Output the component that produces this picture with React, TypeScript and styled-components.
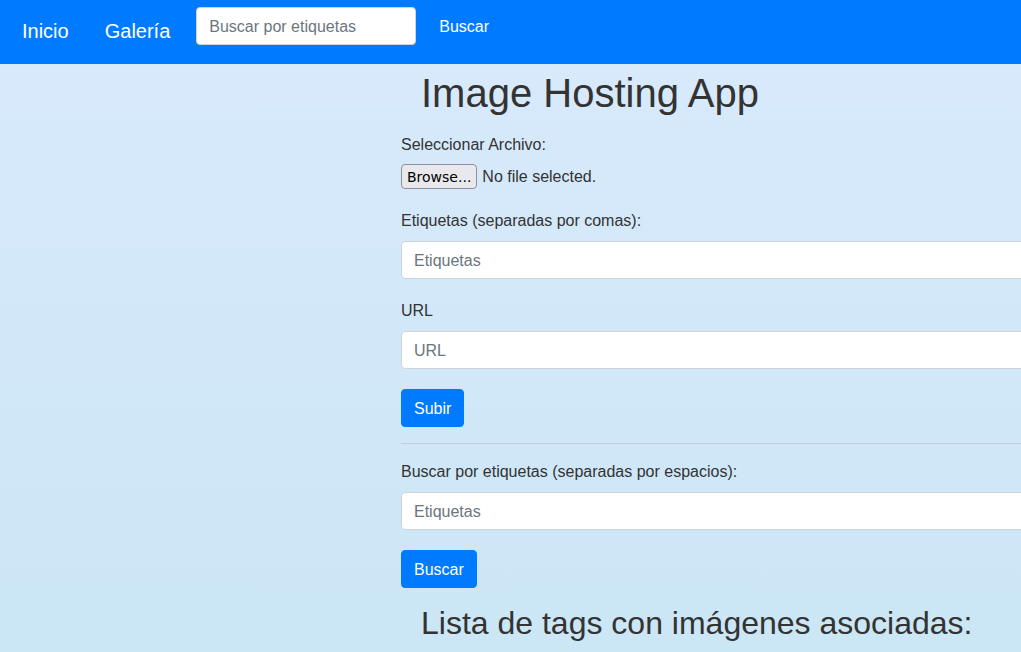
import React from "react";
import styled, { createGlobalStyle } from "styled-components";

const GlobalStyle = createGlobalStyle`
  html, body {
    margin: 0;
    padding: 0;
  }
  body {
    font-family: "Liberation Sans", Arial, sans-serif;
    color: #333333;
    background: linear-gradient(to bottom, #d9eafc 0%, #cbe6f5 100%);
    min-height: 100vh;
    overflow: hidden;
  }
  * { box-sizing: border-box; }
`;

const Navbar = styled.nav`
  height: 64px;
  background: #007bff;
  display: flex;
  align-items: flex-start;
  padding: 7px 0 0 4px;
`;

const NavLink = styled.a`
  color: #ffffff;
  font-size: 20px;
  line-height: 30px;
  padding: 0 18px;
  margin-top: 9px;
  text-decoration: none;
`;

const NavSearch = styled.form`
  display: flex;
  align-items: flex-start;
  margin-left: 8px;
`;

const Input = styled.input<{ $width?: string }>`
  display: block;
  width: ${(p) => p.$width ?? "100%"};
  height: 38px;
  padding: 7px 12px 5px;
  font-family: "Liberation Sans", Arial, sans-serif;
  font-size: 16px;
  line-height: 24px;
  color: #495057;
  background: #ffffff;
  border: 1px solid #ced4da;
  border-radius: 4px;
  outline: none;
  &::placeholder {
    color: #6c757d;
    opacity: 1;
  }
`;

const NavButton = styled.button`
  margin-left: 10px;
  height: 38px;
  padding: 7px 12px 5px;
  border: 1px solid transparent;
  background: transparent;
  color: #ffffff;
  font-family: "Liberation Sans", Arial, sans-serif;
  font-size: 16px;
  line-height: 24px;
`;

const Main = styled.main`
  padding-left: 401px;
`;

const Column = styled.div`
  width: 820px;
`;

const Title = styled.h1`
  margin: 5px 0 16px 20px;
  font-size: 40px;
  font-weight: 400;
  line-height: 1.2;
  color: #333333;
`;

const SubTitle = styled.h2`
  margin: 16px 0 0 20px;
  font-size: 32px;
  font-weight: 400;
  line-height: 1.2;
  color: #333333;
`;

const Group = styled.div`
  margin-bottom: 20px;
`;

const Label = styled.label`
  display: block;
  font-size: 16px;
  line-height: 24px;
  margin-bottom: 8px;
  color: #333333;
`;

const FileRow = styled.div`
  display: flex;
  align-items: center;
  height: 24px;
  gap: 5px;
`;

const BrowseButton = styled.button`
  height: 25px;
  margin-top: -1px;
  padding: 0 5px;
  font-family: "DejaVu Sans", sans-serif;
  font-size: 14px;
  color: #000000;
  background: #e9e9ed;
  border: 1px solid #8f8f9d;
  border-radius: 4px;
`;

const FileText = styled.span`
  font-size: 16px;
  color: #333333;
`;

const PrimaryButton = styled.button`
  display: block;
  height: 38px;
  padding: 7px 12px 5px;
  font-family: "Liberation Sans", Arial, sans-serif;
  font-size: 16px;
  line-height: 24px;
  color: #ffffff;
  background: #007bff;
  border: 1px solid #007bff;
  border-radius: 4px;
`;

const Divider = styled.hr`
  margin: 16px 0;
  border: 0;
  border-top: 1px solid rgba(0, 0, 0, 0.1);
`;

export default function App() {
  return (
    <>
      <GlobalStyle />
      <Navbar>
        <NavLink href="#">Inicio</NavLink>
        <NavLink href="#">Galería</NavLink>
        <NavSearch onSubmit={(e) => e.preventDefault()}>
          <Input $width="220px" placeholder="Buscar por etiquetas" />
          <NavButton type="submit">Buscar</NavButton>
        </NavSearch>
      </Navbar>
      <Main>
        <Column>
          <Title>Image Hosting App</Title>
          <Group>
            <Label>Seleccionar Archivo:</Label>
            <FileRow>
              <BrowseButton type="button">Browse...</BrowseButton>
              <FileText>No file selected.</FileText>
            </FileRow>
          </Group>
          <Group>
            <Label>Etiquetas (separadas por comas):</Label>
            <Input placeholder="Etiquetas" />
          </Group>
          <Group>
            <Label>URL</Label>
            <Input placeholder="URL" />
          </Group>
          <PrimaryButton type="button">Subir</PrimaryButton>
          <Divider />
          <Group>
            <Label>Buscar por etiquetas (separadas por espacios):</Label>
            <Input placeholder="Etiquetas" />
          </Group>
          <PrimaryButton type="button">Buscar</PrimaryButton>
          <SubTitle>Lista de tags con imágenes asociadas:</SubTitle>
        </Column>
      </Main>
    </>
  );
}
